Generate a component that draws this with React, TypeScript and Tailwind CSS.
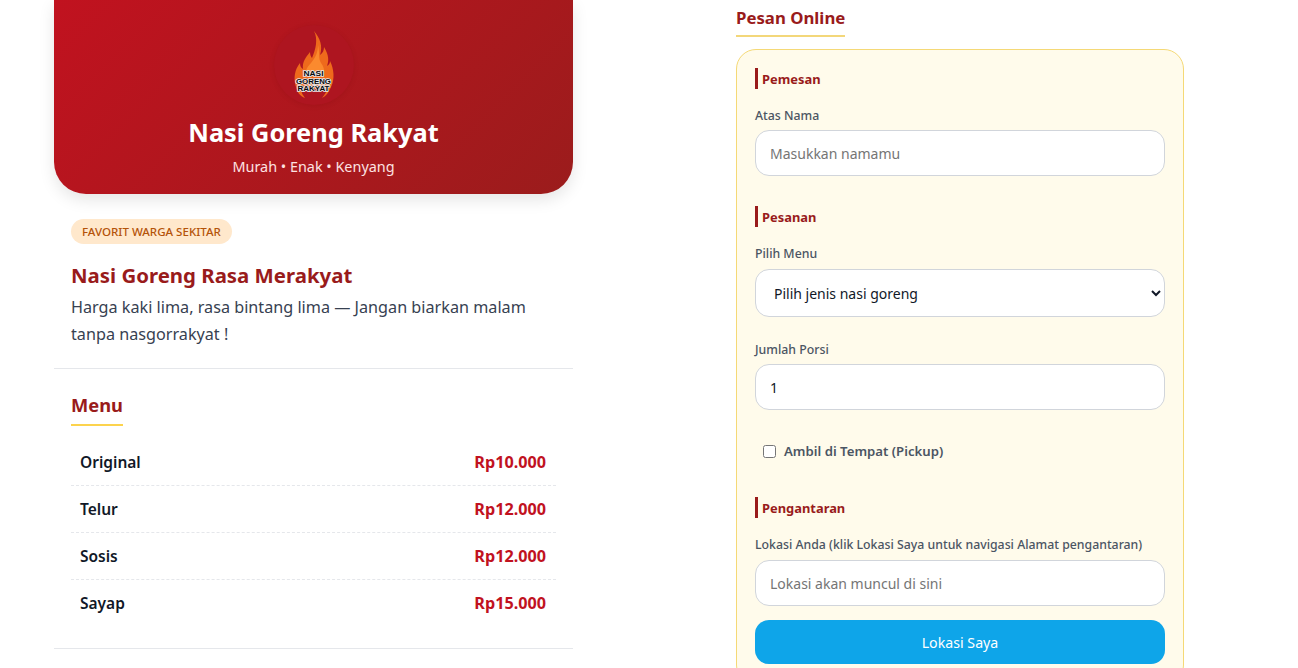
const menu = [
  { name: "Original", price: "Rp10.000" },
  { name: "Telur", price: "Rp12.000" },
  { name: "Sosis", price: "Rp12.000" },
  { name: "Sayap", price: "Rp15.000" },
];

function FlameLogo() {
  return (
    <svg width="80" height="80" viewBox="0 0 80 80" className="block">
      <path d="M40 6 C46 13 49 21 46 30 C49 28 50 25 50 22 C55 30 55 36 53 41 C55 40 56 38 56 36 C60 44 61 54 57 62 C55 67 52 71 48 73 C52 68 53 66 52 64 L28 64 C27 67 28 69 31 73 C26 71 23 67 22 62 C19 53 21 44 26 38 C26 41 27 43 29 44 C28 37 32 32 36 27 C36 30 37 32 38 33 C42 24 44 14 40 6 Z" fill="#ee6a1c" />
      <path d="M44 20 C46 28 44 33 47 38 C50 42 51 46 49 50 L32 50 C31 45 34 41 37 38 C41 33 44 28 44 20 Z" fill="#fb8a2e" />
      <g
        fontFamily="'Liberation Sans', sans-serif"
        fontWeight="700"
        fill="#0b0b0b"
        stroke="#e5e7eb"
        strokeWidth="1.5"
        textAnchor="middle"
        style={{ paintOrder: "stroke" }}
      >
        <text x="39.5" y="51" fontSize="6.6" textLength="20" lengthAdjust="spacingAndGlyphs">NASI</text>
        <text x="39.5" y="58.5" fontSize="6.6" textLength="35" lengthAdjust="spacingAndGlyphs">GORENG</text>
        <text x="39.5" y="66" fontSize="6.6" textLength="32" lengthAdjust="spacingAndGlyphs">RAKYAT</text>
      </g>
    </svg>
  );
}

function SectionTitle({ children, className = "" }: { children: string; className?: string }) {
  return (
    <div className={`border-l-[3px] border-[#991b1b] pl-1 pt-[2px] h-[21px] flex items-center text-[12.9px] font-bold text-[#991b1b] ${className}`}>
      {children}
    </div>
  );
}

function Label({ children, className = "mb-[7px]" }: { children: string; className?: string }) {
  return <label className={`block text-[12.3px] leading-[16px] font-medium text-[#4b5563] ${className}`}>{children}</label>;
}

export default function App() {
  return (
    <div className="h-[668px] overflow-hidden bg-white flex pl-[54px] font-['Noto_Sans',sans-serif] text-[#1f2937]">
      <div className="w-[519px] shrink-0">
        <div className="h-[194px] rounded-b-[32px] bg-[linear-gradient(135deg,#c1121f,#9b1c1c)] shadow-[0_6px_16px_rgba(0,0,0,0.1)] flex flex-col items-center pt-[25px]">
          <div className="w-[80px] h-[80px] rounded-full bg-[#ae1520] shadow-[0_1px_5px_rgba(100,0,0,0.15)]">
            <FlameLogo />
          </div>
          <h1 className="mt-[10px] text-[25.4px] leading-[34px] font-bold text-white">Nasi Goreng Rakyat</h1>
          <p className="mt-[9px] text-[14.4px] leading-[18px] text-[#fde2e2]">Murah • Enak • Kenyang</p>
        </div>

        <div className="px-[17px] pt-[24px] border-b border-[#e5e7eb] pb-[20px]">
          <span className="inline-block bg-[#ffe8cc] rounded-full px-[11px] h-[25px] leading-[25px] text-[11.55px] font-medium text-[#b45309]">FAVORIT WARGA SEKITAR</span>
          <h2 className="mt-[16px] text-[20.4px] leading-[30px] font-bold text-[#991b1b]">Nasi Goreng Rasa Merakyat</h2>
          <p className="mt-[4px] text-[16.2px] leading-[27px] text-[#374151]">Harga kaki lima, rasa bintang lima — Jangan biarkan malam<br />tanpa nasgorrakyat !</p>
        </div>

        <div className="px-[17px] pt-[22px] pb-[21px] border-b border-[#e5e7eb]">
          <h3 className="inline-block border-b-2 border-[#fcd34d] pb-[6px] text-[18.3px] leading-[27px] font-bold text-[#991b1b]">Menu</h3>
          <ul className="mt-[13px]">
            {menu.map((m, i) => (
              <li key={m.name} className={`h-[47px] flex items-center justify-between pl-[9px] pr-[10px] border-b border-dashed ${i < menu.length - 1 ? "border-[#e5e7eb]" : "border-transparent"}`}>
                <span className="pt-[2px] text-[15.5px] font-semibold text-[#111827]">{m.name}</span>
                <span className="text-[16.2px] font-bold text-[#c1121f]">{m.price}</span>
              </li>
            ))}
          </ul>
        </div>
      </div>

      <div className="ml-[163px] w-[448px] shrink-0 pt-[5px]">
        <h2 className="inline-block border-b-2 border-[#f3d77a] pb-[5px] text-[16.8px] leading-[25px] font-bold text-[#991b1b]">Pesan Online</h2>
        <div className="mt-[12px] rounded-[20px] border border-[#f5d976] bg-[#fffbeb] px-[18px] pt-[18px] pb-[20px]">
          <SectionTitle>Pemesan</SectionTitle>
          <div className="mt-[19px]">
            <Label className="mb-[6px]">Atas Nama</Label>
            <input placeholder="Masukkan namamu" className="block w-full h-[46px] rounded-[14px] border border-[#d1d5db] bg-white px-[14px] text-[14px] text-[#111827] placeholder:text-[#757575] outline-none" />
          </div>

          <SectionTitle className="mt-[30px]">Pesanan</SectionTitle>
          <div className="mt-[19px]">
            <Label>Pilih Menu</Label>
            <select className="block w-full h-[48px] rounded-[14px] border border-[#d1d5db] bg-white px-[14px] text-[14px] text-[#111827] outline-none">
              <option>Pilih jenis nasi goreng</option>
            </select>
          </div>

          <div className="mt-[25px]">
            <Label className="mb-[6px]">Jumlah Porsi</Label>
            <input defaultValue="1" className="block w-full h-[46px] rounded-[14px] border border-[#d1d5db] bg-white px-[14px] text-[14px] text-[#111827] outline-none" />
          </div>

          <label className="mt-[32px] ml-[8px] flex items-center gap-[8px] text-[13.2px] font-semibold text-[#4b5563]">
            <input type="checkbox" className="w-[13px] h-[13px] m-0" />
            Ambil di Tempat (Pickup)
          </label>

          <SectionTitle className="mt-[35px]">Pengantaran</SectionTitle>
          <div className="mt-[19px]">
            <Label>Lokasi Anda (klik Lokasi Saya untuk navigasi Alamat pengantaran)</Label>
            <input placeholder="Lokasi akan muncul di sini" className="block w-full h-[46px] rounded-[14px] border border-[#d1d5db] bg-white px-[14px] pt-[2px] text-[14px] text-[#111827] placeholder:text-[#757575] outline-none" />
          </div>
          <button type="button" className="mt-[14px] w-full h-[44px] rounded-[14px] bg-[#0ea5e9] pt-[2px] text-[14.2px] font-normal text-white">Lokasi Saya</button>
        </div>
      </div>
    </div>
  );
}
